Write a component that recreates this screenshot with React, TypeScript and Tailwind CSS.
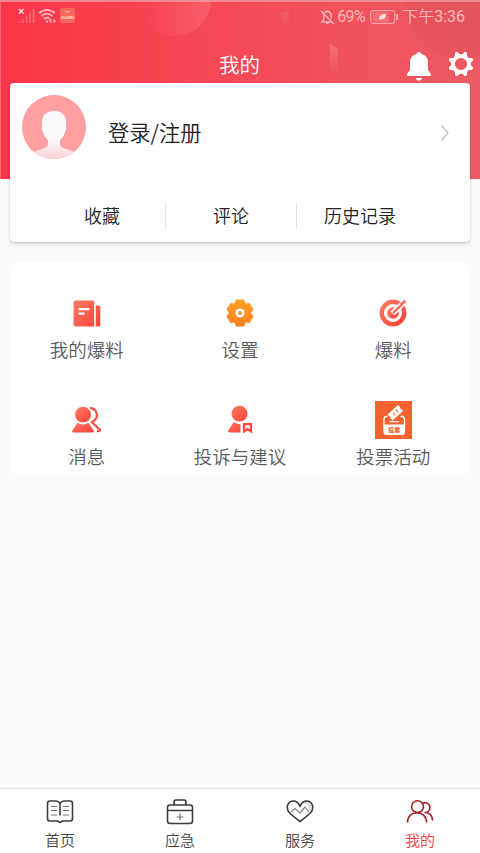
import React from 'react';

const GRADIENT = 'url(#warm)';

const Defs = () => (
  <svg width="0" height="0" className="absolute">
    <defs>
      <linearGradient id="warm" x1="0" y1="0" x2="1" y2="1">
        <stop offset="0%" stopColor="#ff7a61" />
        <stop offset="100%" stopColor="#fa4238" />
      </linearGradient>
      <linearGradient id="orange" x1="0" y1="0" x2="0" y2="1">
        <stop offset="0%" stopColor="#ff9f22" />
        <stop offset="100%" stopColor="#ff8023" />
      </linearGradient>
    </defs>
  </svg>
);

const HeaderBackdrop = () => (
  <svg className="absolute inset-0" width="480" height="179" viewBox="0 0 480 179">
    <defs>
      <linearGradient id="bubble" x1="0" y1="0.7" x2="1" y2="0.9">
        <stop offset="10%" stopColor="#fff" stopOpacity="0" />
        <stop offset="100%" stopColor="#fff" stopOpacity="0.13" />
      </linearGradient>
      <linearGradient id="shade" x1="0" y1="1" x2="1" y2="0">
        <stop offset="0%" stopColor="#c8404c" stopOpacity="0.08" />
        <stop offset="100%" stopColor="#c8404c" stopOpacity="0.4" />
      </linearGradient>
      <linearGradient id="tower" x1="0" y1="0" x2="0" y2="1">
        <stop offset="0%" stopColor="#fff" stopOpacity="0.18" />
        <stop offset="100%" stopColor="#fff" stopOpacity="0" />
      </linearGradient>
    </defs>
    <circle cx="175" cy="0" r="36" fill="url(#bubble)" />
    <circle cx="460" cy="2" r="56" fill="url(#shade)" />
    <path d="M330 44l8 5v24h-8z" fill="url(#tower)" />
    <path d="M281 12h8v16h-8z" fill="url(#tower)" opacity="0.4" />
    <path d="M242 75l11 6M243 71l10 6M264 68v13" stroke="#d63e4a" strokeOpacity="0.35" />
    <path d="M0 1h480" stroke="#f0a0a4" strokeWidth="2" opacity="0.75" />
    <path d="M.5 0v179" stroke="#ff8994" opacity="0.6" />
  </svg>
);

const StatusBar = () => (
  <div className="relative flex h-8 items-start justify-between pl-[18px] pr-[15px] text-[#fbb7bb]">
    <svg width="58" height="17" viewBox="0 0 58 17" className="mt-[7px]" fill="none" stroke="currentColor">
      <path d="M1 2l4.500 4.500M5.500 2L1 6.500" stroke="#ffdcdf" strokeWidth="1.500" />
      <path d="M1.500 14.500v1.500M5 12.500v3.500M8.500 9v7M12 5.500V16M15.500 2v14" strokeWidth="1.500" opacity="0.45" />
      <path d="M21 6.300q8-7 16 0M23.500 9.200q5.500-5 11 0M26 12q3-2.500 6 0" strokeWidth="1.700" />
      <circle cx="29" cy="14.500" r="1.200" fill="currentColor" stroke="none" />
      <path d="M33.500 12.500l-1.500 1.500 1.500 1.500M35.500 12.500l1.500 1.500-1.500 1.500" strokeWidth="1.300" />
      <rect x="42" y="1" width="15" height="15" rx="2.500" fill="#f7785f" fillOpacity="0.75" stroke="none" />
      <path d="M47 4q2.500 3 5 0" stroke="#ffcdc0" />
      <text x="49.500" y="11.500" textAnchor="middle" fontSize="3.400" fontWeight="700" fill="#ffdcd2" stroke="none" fontFamily="Roboto">HUAWEI</text>
    </svg>
    <div className="mt-[6px] flex h-[21px] items-center font-['Roboto','Noto_Sans_CJK_SC',sans-serif] text-[16px] font-normal">
      <svg width="15" height="16" viewBox="0 0 15 16" className="mr-[2px]" fill="none" stroke="currentColor" strokeWidth="1.300">
        <path d="M4 3.600Q5 2.500 7.500 2.500c3 0 3.800 2.500 3.800 5v2M3.700 5v6L2 12.800h10M7.500 1v1.500M6 13q1.500 3 3 0M1 2l13 13" />
      </svg>
      <span className="w-[31px] tracking-[-0.5px]">69%</span>
      <svg width="28" height="14" viewBox="0 0 28 14" className="ml-[2px]" fill="none" stroke="currentColor">
        <rect x=".7" y=".7" width="24" height="12.600" rx="2" />
        <rect x="2.500" y="2.500" width="16" height="9" fill="currentColor" stroke="none" opacity="0.3" />
        <path d="M9 10c0-5 3-6 7-6 0 4-2 6-6 5.500" fill="#ffdcdf" stroke="none" />
        <path d="M27 4v6" strokeWidth="1.700" />
      </svg>
      <span className="ml-[4px] whitespace-nowrap"><span className="font-[350]">下午</span>3:36</span>
    </div>
  </div>
);

const TitleBar = () => (
  <div className="relative flex h-[51px] justify-center pt-[17px] text-white">
    <h1 className="-ml-px text-[20.500px] leading-[30px]">我的</h1>
    <div className="absolute right-[6px] top-[18px] flex gap-[17px]">
      <svg width="24" height="31" viewBox="0 0 24 31" fill="currentColor">
        <path d="M12 2c1.500 0 2.200.8 2.300 2C18.500 5 21 8 21 12v8l2.800 3.800v2.200H.2v-2.200L3 20v-8c0-4 2.500-7 6.700-8C9.800 2.800 10.500 2 12 2zM8.800 28h6.400q-.7 2.800-3.200 2.800T8.800 28z" />
      </svg>
      <svg width="26" height="28" viewBox="-13 -14 26 28" fill="none">
        <circle r="7.900" stroke="currentColor" strokeWidth="3.600" />
        {[22.5, 67.5, 112.5, 157.5, 202.5, 247.5, 292.5, 337.5].map((angle) => (
          <path key={angle} d="M-3.600-8.900Q-1.900-9.800-1.300-12.700H1.300Q1.900-9.800 3.600-8.900z" fill="currentColor" transform={`rotate(${angle})`} />
        ))}
      </svg>
    </div>
  </div>
);

const Avatar = () => (
  <svg width="64" height="64" viewBox="0 0 64 64">
    <defs>
      <linearGradient id="person" x1="0" y1="0" x2="0" y2="1">
        <stop offset="60%" stopColor="#fafafa" />
        <stop offset="100%" stopColor="#fcd0d3" />
      </linearGradient>
      <clipPath id="round"><circle cx="32" cy="32" r="32" /></clipPath>
    </defs>
    <circle cx="32" cy="32" r="32" fill="#ff9fa2" />
    <path clipPath="url(#round)" fill="url(#person)" d="M32 16c8 0 12 4.500 12 11v5c.7.600.5 3-.7 4-1 5-3.300 7-5.300 9v4c0 3 3 4 8 5.500 3 1 5 1.500 7 3.500V64H11v-6c2-2 4-2.500 7-3.500 5-1.500 8-2.500 8-5.500v-4c-2-2-4.300-4-5.300-9-1.200-1-1.400-3.400-.7-4v-5c0-6.500 4-11 12-11z" />
  </svg>
);

const ProfileCard = () => (
  <section className="relative mx-[10px] -mt-24 h-[159px] rounded-[4px] bg-white shadow-[0_1px_2px_rgba(0,0,0,0.16),0_3px_5px_rgba(0,0,0,0.08)]">
    <div className="flex h-[101px] items-center pl-3 pr-[21px]">
      <div className="-mt-[13px]"><Avatar /></div>
      <span className="-mt-[3px] ml-[22px] flex-1 text-[21.300px] leading-[30px] text-[#222]">登录/注册</span>
      <svg width="9" height="18" viewBox="0 0 9 18" fill="none" stroke="#bbb" strokeWidth="1.200" className="-mt-[2px]">
        <path d="M1.500 1.500L8 9l-6.500 7.500" />
      </svg>
    </div>
    <div className="mt-[19px] flex h-[25px] items-center pl-[28px] pr-[45px] text-center text-[18px] text-[#222]">
      <span className="w-[127px] pl-px leading-[25px]">收藏</span>
      <span className="w-[132px] border-x border-[#e4e4e4] leading-[25px]">评论</span>
      <span className="w-[128px] pr-[2px] leading-[25px]">历史记录</span>
    </div>
  </section>
);

const NewsIcon = () => (
  <svg width="36" height="36" viewBox="0 0 36 36">
    <path fill={GRADIENT} d="M6.500 5.500h17q1.800 0 1.800 2v22q0 1.800 1 2H6.500q-2 0-2-2v-22q0-2 2-2zM26.500 10.500h3q1.800 0 1.800 2V30q0 1.500-1.800 1.500h-2q-1 0-1-1.500z" />
    <path d="M9.500 14.200h11M9.500 18.700h6" stroke="#fff" strokeWidth="2.200" />
    <path d="M26 10v21" stroke="#fff" strokeWidth="1.200" />
  </svg>
);

const GearIcon = () => (
  <svg width="36" height="36" viewBox="-18 -18 36 36">
    <path
      d="M-4.700-9.400L-3.400-12.600H3.400L4.700-9.400 5.800-8.800 9.200-9.200 12.600-3.400 10.500-.6V.6L12.600 3.400 9.200 9.200 5.800 8.800 4.700 9.400 3.400 12.600H-3.400L-4.700 9.400-5.800 8.800-9.200 9.200-12.600 3.400-10.500.6V-.6L-12.600-3.400-9.200-9.200-5.800-8.800z"
      fill="url(#orange)"
      stroke="url(#orange)"
      strokeWidth="1.600"
      strokeLinejoin="round"
    />
    <circle r="3.300" fill="none" stroke="#fff" strokeWidth="2.600" />
  </svg>
);

const TargetIcon = () => (
  <svg width="36" height="36" viewBox="-18 -18 36 36" fill="none">
    <circle r="11.200" stroke={GRADIENT} strokeWidth="4.400" />
    <circle r="5.800" fill={GRADIENT} />
    <path d="M-.5.5L13.500-13" stroke="#fff" strokeWidth="5.500" />
    <path d="M0 0L9-8.500" stroke="#ff6551" strokeWidth="2.400" />
    <path d="M7-9.500l5-4 1 2.500-4.500 4z" fill="#ff6551" />
  </svg>
);

const PeopleIcon = () => (
  <svg width="36" height="36" viewBox="0 1.300 36 36">
    <circle cx="14" cy="14" r="7.900" fill={GRADIENT} />
    <path fill={GRADIENT} d="M8.500 22q5.500 3.500 11 0l5 7.500q1 2.200-1.500 2.200H5q-2.500 0-1.500-2.200z" />
    <path d="M21 7.500c7 0 8.500 8 5 11.500l-3 2.500 7.800 7.500q.8 1.500-1.300 1.500H28" fill="none" stroke="#fc5044" strokeWidth="2.200" />
  </svg>
);

const AdviceIcon = () => (
  <svg width="36" height="36" viewBox="0 1.300 36 36">
    <circle cx="17.500" cy="13" r="7.900" fill={GRADIENT} />
    <path fill={GRADIENT} d="M11.500 21.500q4 2 7 2v8.200H8q-3 0-1.500-2.500z" />
    <path d="M22 23.500h7v7.200L25.500 28.500 22 30.700z" fill="none" stroke="#fb4a3f" strokeWidth="2.300" />
  </svg>
);

const VoteIcon = () => (
  <svg width="37" height="38" viewBox="0 0 37 38">
    <path d="M0 0h37v38H0z" fill="#f4632f" />
    <path d="M12.500 15.500H11.500q-2.500 0-2.500 3v7h20.500v-7q0-3-2.500-3h-1.500M14.500 20.700h9" fill="none" stroke="#fff" strokeWidth="1.300" />
    <path d="M8.400 23.500h21.700v7.500q0 3-3 3H11.400q-3 0-3-3z" fill="#fff" />
    <path d="M12.500 13.500l10.500-9.500 2 2q-.7 1.800 1.200 2l1.800 2-10.500 9.500-2-2.200q.7-1.800-1.200-2z" fill="#fff" />
    <path d="M17.800 11.500l2.500 2.800M21 8.700l2.500 2.800" stroke="#f4632f" strokeWidth="1.100" />
    <text x="19.200" y="31" textAnchor="middle" fontSize="6" fontWeight="900" fill="#f4632f">投票</text>
  </svg>
);

const services = [
  { label: '我的爆料', Icon: NewsIcon },
  { label: '设置', Icon: GearIcon },
  { label: '爆料', Icon: TargetIcon },
  { label: '消息', Icon: PeopleIcon },
  { label: '投诉与建议', Icon: AdviceIcon },
  { label: '投票活动', Icon: VoteIcon },
];

const ServiceGrid = () => (
  <section className="mx-[10px] mt-5 grid h-[213px] auto-rows-[107px] grid-cols-3 overflow-hidden rounded-[10px] bg-white">
    {services.map(({ label, Icon }) => (
      <button key={label} className="flex flex-col items-center pt-[32px]">
        <span className="flex h-[38px] items-center"><Icon /></span>
        <span className="mt-[3px] text-[18.500px] leading-[28px] text-[#5c5c5c]">{label}</span>
      </button>
    ))}
  </section>
);

const BookIcon = () => (
  <g>
    <path d="M15 5.500Q13.500 3 11 3H5Q2.500 3 2.500 5.500v15q0 2.500 2.500 2.500h7.500l2.500 1.500 2.500-1.500H25q2.500 0 2.500-2.500v-15Q27.500 3 25 3h-6q-2.500 0-4 2.500V17.500" />
    <path d="M6 8.500h6M6 12.500h6M6 17h6M18 8.500h6M18 12.500h6M18 17h6" strokeWidth="1.200" stroke="#777" />
  </g>
);

const KitIcon = () => (
  <g>
    <rect x="2.500" y="7" width="25" height="18.500" rx="2.500" />
    <path d="M9 7V4.500Q9 2 11 2h8q2 0 2 2.500V7M2.500 12.500h25" />
    <path d="M15 15.500v7M11.500 19h7" strokeWidth="1.200" stroke="#777" />
  </g>
);

const HeartIcon = () => (
  <g>
    <path d="M19 5c4-2 7 2 6 7" stroke="#ddd" strokeWidth="2.500" />
    <path d="M15 23.700L5 15.500C-1 9 4 2.500 9 3q4 .5 6 5.500Q17 3.500 21 3c5-.5 10 6 4 12.500z" />
    <path d="M5.500 14.500l4.500-4 5 4.500 5-6 4 5.500" strokeWidth="1.200" stroke="#888" />
  </g>
);

const MineIcon = () => (
  <g>
    <circle cx="12.500" cy="8.700" r="5.900" />
    <path d="M2.500 24.500c0-13 19-13 19 0M17 6c3-3 8-.5 8 3.500 0 3-2.500 5-5.500 5M21.500 14.500c4 1 6 3.500 6 8" />
  </g>
);

const tabs = [
  { label: '首页', Icon: BookIcon },
  { label: '应急', Icon: KitIcon },
  { label: '服务', Icon: HeartIcon },
  { label: '我的', Icon: MineIcon, active: true },
];

const TabBar = () => (
  <nav className="mt-auto grid h-[65px] grid-cols-4 border-t border-[#e2e2e2] bg-white">
    {tabs.map(({ label, Icon, active }) => (
      <button key={label} className={`flex flex-col items-center pt-[9px] ${active ? 'text-[#f03d48]' : 'text-[#444]'}`}>
        <svg width="30" height="28" viewBox="0 0 30 28" fill="none" stroke={active ? '#a51f2b' : '#3c3c3c'} strokeWidth="1.600" strokeLinejoin="round">
          <Icon />
        </svg>
        <span className="mt-[4px] text-[15px] leading-[20px]">{label}</span>
      </button>
    ))}
  </nav>
);

export default function App() {
  return (
    <div className="flex h-[853px] w-[480px] flex-col overflow-hidden bg-[#fafafa] font-['Noto_Sans_CJK_SC',sans-serif] font-[350]">
      <Defs />
      <header className="relative h-[179px] shrink-0 bg-linear-to-r from-[#fb3548] to-[#ec5a62]">
        <HeaderBackdrop />
        <StatusBar />
        <TitleBar />
      </header>
      <ProfileCard />
      <ServiceGrid />
      <TabBar />
    </div>
  );
}
